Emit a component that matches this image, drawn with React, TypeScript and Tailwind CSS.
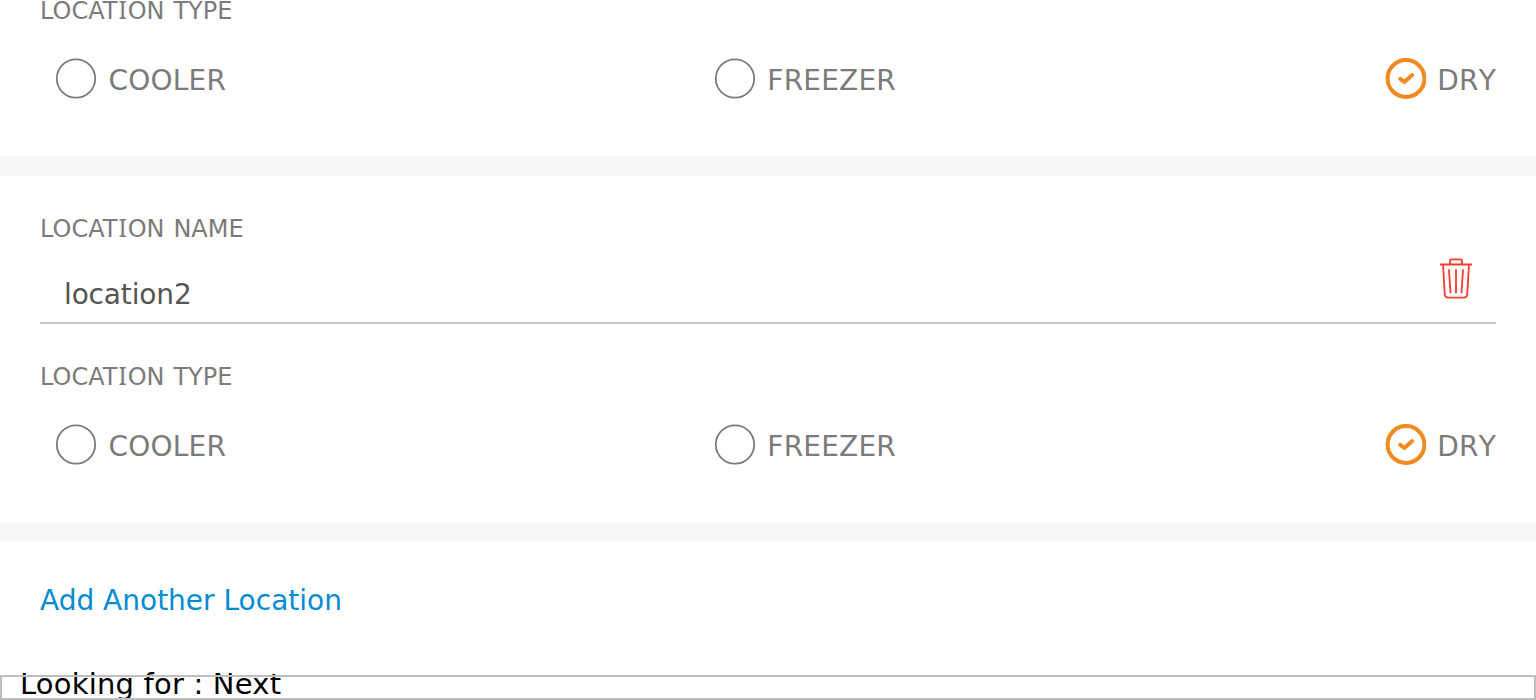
const serifI = "inline-block w-[0.421em] text-center font-['Noto_Sans',sans-serif] text-[24.5px] leading-none";

function Label({ text }: { text: string }) {
  return (
    <div className="-mt-px mb-px h-6 whitespace-nowrap text-2xl leading-6 text-[#7b7b7b] [word-spacing:0.05em]">
      {text.split("I").map((part, i) => (
        <span key={i}>
          {i > 0 && <span className={serifI}>I</span>}
          {part}
        </span>
      ))}
    </div>
  );
}

function Option({ label, checked = false }: { label: string; checked?: boolean }) {
  return (
    <label className="flex items-center">
      <svg width="42" height="42" viewBox="0 0 42 42" fill="none">
        {checked ? (
          <>
            <circle cx="22" cy="20.5" r="18.4" stroke="#f18a20" strokeWidth="4" />
            <path d="M16.2 20.8 L20.4 24 L28.2 17" stroke="#f18a20" strokeWidth="4" strokeLinecap="round" strokeLinejoin="round" />
          </>
        ) : (
          <circle cx="21" cy="20.5" r="19.2" stroke="#7b7b7b" strokeWidth="1.8" />
        )}
      </svg>
      <span className="ml-[11.5px] mt-[4px] text-[28px] leading-7 tracking-[0.2px] text-[#7b7b7b] [font-kerning:none]">{label}</span>
    </label>
  );
}

function LocationType() {
  return (
    <>
      <Label text="LOCATION TYPE" />
      <div className="mt-[35px] flex h-[42px] items-center justify-between pl-[15px]">
        <Option label="COOLER" />
        <Option label="FREEZER" />
        <Option label="DRY" checked />
      </div>
    </>
  );
}

function Trash() {
  return (
    <svg width="34" height="42" viewBox="0 0 34 42" fill="none" stroke="#ff3b30" strokeWidth="1.8">
      <path d="M1 6.5H33M11 6.5V2.7Q11 1.4 12.3 1.4H21.7Q23 1.4 23 2.7V6.5M4 6.5L5.8 36.5Q6 39.7 9 39.7H25Q28 39.7 28.2 36.5L30 6.5" />
      <path d="M10 12L11.5 34.5M17 12V34.5M24 12L22.5 34.5" strokeLinecap="round" />
    </svg>
  );
}

export default function App() {
  return (
    <main className="flex h-[700px] w-full flex-col overflow-hidden bg-white font-['DejaVu_Sans',sans-serif]">
      <section className="-mt-px flex h-[157px] shrink-0 flex-col px-10">
        <LocationType />
      </section>
      <div className="h-5 shrink-0 bg-[#f8f8f8]" />
      <section className="h-[346px] shrink-0 px-10 pt-[41px]">
        <Label text="LOCATION NAME" />
        <div className="flex h-[83px] items-start justify-between border-b-2 border-[#cacaca] pl-6 pr-[23px] pt-[17px]">
          <span className="mt-[23px] text-[28px] leading-7 tracking-[-0.15px] text-[#555]">location2</span>
          <Trash />
        </div>
        <div className="flex flex-col pt-[41px]">
          <LocationType />
        </div>
      </section>
      <div className="h-5 shrink-0 bg-[#f8f8f8]" />
      <section className="h-[133px] shrink-0 px-10 pt-[45px]">
        <button className="block whitespace-nowrap text-[28px] leading-7 text-[#038bd3]">Add Another Location</button>
      </section>
      <footer className="relative flex h-[25px] shrink-0 pl-[20px]">
        <span className="-mt-[5px] h-7 whitespace-pre text-[29px] leading-7 tracking-[0.2px] text-black">Looking for : Next</span>
        <span className="absolute inset-0 border-2 border-[#bfbfbf]" />
      </footer>
    </main>
  );
}
